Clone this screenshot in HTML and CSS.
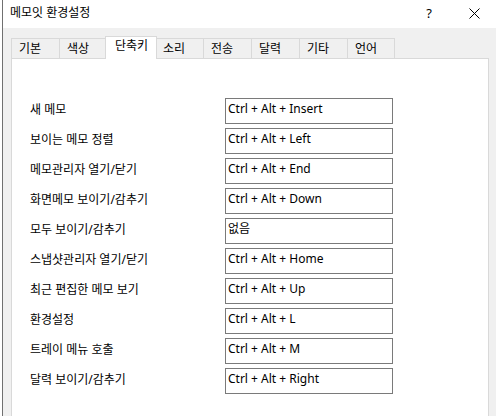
FILE: index.html
```html
<!DOCTYPE html>
<html lang="ko">
<head>
    <meta charset="UTF-8">
    <meta name="viewport" content="width=device-width, initial-scale=1.0">
    <title>메모잇 환경설정</title>
    <link rel="stylesheet" href="styles.css">
</head>
<body>
    <div class="window">
        <div class="titlebar">
            <span class="title">메모잇 환경설정</span>
            <span class="cap-btn help">?</span>
            <span class="cap-btn close">
                <svg width="11" height="11" viewBox="0 0 11 11">
                    <path d="M0.5 0.5 L10.5 10.5 M10.5 0.5 L0.5 10.5" stroke="#000" stroke-width="1" fill="none"/>
                </svg>
            </span>
        </div>
        <div class="body">
            <div class="tabs">
                <div class="tab">기본</div>
                <div class="tab">색상</div>
                <div class="tab active">단축키</div>
                <div class="tab">소리</div>
                <div class="tab">전송</div>
                <div class="tab">달력</div>
                <div class="tab">기타</div>
                <div class="tab">언어</div>
            </div>
            <div class="panel">
                <div class="shortcuts">
                    <span class="label">새 메모</span>
                    <div class="key">Ctrl + Alt + Insert</div>
                    <span class="label">보이는 메모 정렬</span>
                    <div class="key">Ctrl + Alt + Left</div>
                    <span class="label">메모관리자 열기/닫기</span>
                    <div class="key">Ctrl + Alt + End</div>
                    <span class="label">화면메모 보이기/감추기</span>
                    <div class="key">Ctrl + Alt + Down</div>
                    <span class="label">모두 보이기/감추기</span>
                    <div class="key">없음</div>
                    <span class="label">스냅샷관리자 열기/닫기</span>
                    <div class="key">Ctrl + Alt + Home</div>
                    <span class="label">최근 편집한 메모 보기</span>
                    <div class="key">Ctrl + Alt + Up</div>
                    <span class="label">환경설정</span>
                    <div class="key">Ctrl + Alt + L</div>
                    <span class="label">트레이 메뉴 호출</span>
                    <div class="key">Ctrl + Alt + M</div>
                    <span class="label">달력 보이기/감추기</span>
                    <div class="key">Ctrl + Alt + Right</div>
                </div>
            </div>
        </div>
    </div>
</body>
</html>
```

FILE: styles.css
```css
html, body {
    margin: 0;
    padding: 0;
    height: 100%;
}
body {
    background-color: #fff;
    font-family: "Noto Sans", "Noto Sans CJK KR", sans-serif;
    font-size: 12px;
    color: #000;
    overflow: hidden;
}
.window {
    margin-left: 2px;
    border-left: 1px solid #707070;
    height: 416px;
    background-color: #f0f0f0;
    display: flex;
    flex-direction: column;
}
.titlebar {
    height: 28px;
    background-color: #fff;
    display: flex;
    align-items: center;
    padding-left: 7px;
}
.title {
    flex: 1;
    line-height: 16px;
    padding-bottom: 2px;
}
.cap-btn {
    height: 28px;
    display: flex;
    align-items: center;
    justify-content: center;
}
.help {
    width: 46px;
    font-size: 13px;
    padding-bottom: 2px;
    box-sizing: border-box;
}
.close {
    width: 44px;
    padding-bottom: 2px;
    box-sizing: border-box;
}
.body {
    flex: 1;
    padding: 8px 7px 0 8px;
    display: flex;
    flex-direction: column;
}
.tabs {
    display: flex;
    align-items: flex-end;
    height: 22px;
}
.tab {
    box-sizing: border-box;
    flex-shrink: 0;
    width: 48px;
    height: 20px;
    padding-left: 7px;
    line-height: 19px;
    border-top: 1px solid #d9d9d9;
    border-left: 1px solid #d9d9d9;
    white-space: nowrap;
}
.tab:last-child {
    border-right: 1px solid #d9d9d9;
}
.tab.active {
    position: relative;
    z-index: 1;
    width: 52px;
    height: 23px;
    margin: 0 -2px -1px -2px;
    padding-left: 9px;
    line-height: 18px;
    background-color: #fff;
    border-right: 1px solid #d9d9d9;
}
.panel {
    flex: 1;
    background-color: #fff;
    border: 1px solid #d9d9d9;
    border-bottom: none;
    padding: 39px 0 0 18px;
}
.shortcuts {
    display: grid;
    grid-template-columns: 195px 168px;
    grid-auto-rows: 26px;
    row-gap: 4px;
}
.label {
    align-self: center;
    line-height: 16px;
    padding-bottom: 2px;
    white-space: nowrap;
}
.key {
    box-sizing: border-box;
    border: 1px solid #7a7a7a;
    padding: 1px 2px;
    line-height: 18px;
    white-space: nowrap;
}
```
